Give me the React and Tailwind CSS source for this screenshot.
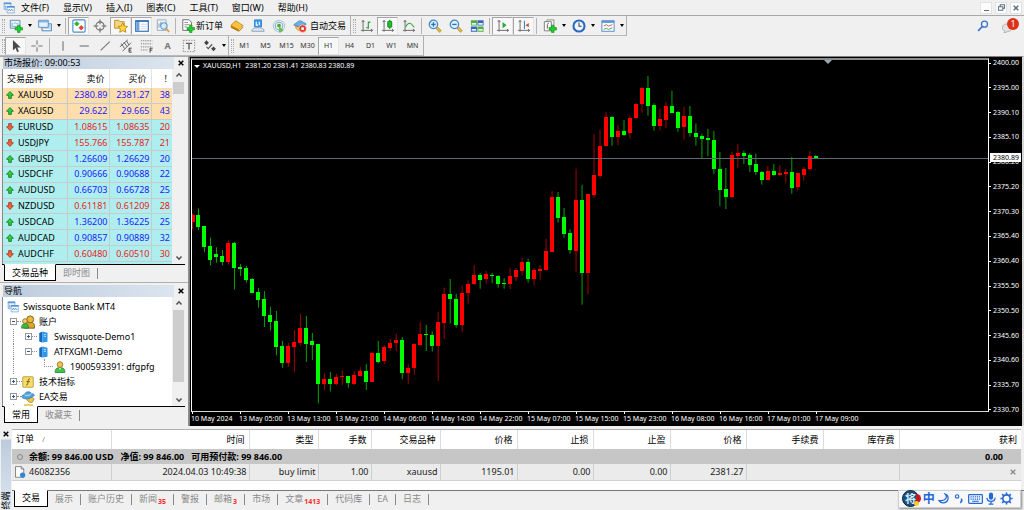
import React from "react";

/* ---------- chart data: [direction, high, body top, body bottom, low] in thirds of a pixel ---------- */
const U = "up";
const D = "down";
const shift = (dy, rows) => rows.map(([d, ...v]) => [d, ...v.map((n) => (n + dy) / 3)]);

const CANDLES = [
  ...shift(426, [
    [U, 40, 45, 66, 88], [D, 25, 45, 81, 90], [D, 77, 79, 140, 157], [D, 113, 138, 180, 196],
    [D, 142, 162, 170, 188], [D, 150, 167, 185, 196], [U, 122, 129, 185, 194], [D, 126, 129, 204, 268],
    [D, 192, 201, 206, 228], [D, 198, 204, 240, 248], [D, 234, 237, 278, 278], [D, 264, 275, 300, 323],
    [D, 273, 297, 347, 381], [D, 320, 345, 365, 392], [D, 333, 363, 441, 466], [D, 423, 438, 489, 503],
    [U, 429, 438, 489, 501], [U, 390, 426, 441, 516], [U, 342, 383, 429, 437], [D, 348, 383, 431, 486],
    [D, 399, 423, 434, 480], [D, 432, 433, 551, 610], [U, 520, 538, 552, 570], [D, 516, 538, 552, 574],
    [U, 521, 530, 552, 556], [U, 511, 528, 530, 554], [D, 528, 529, 549, 563], [U, 514, 525, 552, 555],
    [U, 501, 514, 527, 530], [D, 492, 514, 545, 570], [U, 457, 459, 545, 545], [D, 423, 459, 485, 490],
    [U, 435, 441, 484, 492], [U, 417, 429, 443, 452], [U, 401, 420, 430, 453],
  ]),
  ...shift(366, [
    [D, 471, 480, 578, 598], [U, 553, 564, 578, 611], [U, 490, 493, 564, 584], [U, 426, 462, 495, 497],
    [D, 435, 462, 465, 513], [D, 454, 464, 497, 515], [U, 396, 426, 497, 603], [U, 323, 342, 428, 477],
    [D, 297, 342, 356, 430], [D, 342, 356, 434, 443], [U, 318, 338, 434, 456], [U, 301, 311, 338, 371],
    [U, 255, 285, 312, 315], [D, 279, 285, 300, 326], [U, 273, 282, 297, 311], [D, 279, 285, 288, 309],
    [D, 285, 287, 312, 323], [D, 294, 309, 312, 326], [U, 264, 288, 312, 327], [U, 264, 270, 291, 303],
    [U, 234, 246, 272, 286], [D, 236, 246, 297, 308], [U, 264, 270, 297, 315], [U, 255, 267, 272, 299],
    [U, 177, 213, 270, 273], [U, 33, 51, 215, 215], [D, 36, 52, 113, 128], [D, 84, 110, 162, 173],
    [D, 148, 160, 210, 221], [U, -34, 60, 212, 275], [D, 15, 60, 279, 374], [U, 42, 43, 279, 342],
  ]),
  ...shift(-6, [
    [U, 234, 357, 417, 426], [U, 221, 269, 359, 367], [U, 168, 183, 270, 272], [D, 180, 183, 242, 269],
    [U, 207, 225, 242, 267], [D, 192, 225, 237, 240], [U, 179, 186, 231, 248], [U, 141, 143, 187, 190],
    [U, 93, 96, 144, 170], [D, 60, 96, 150, 179], [D, 142, 147, 210, 224], [U, 158, 189, 210, 223],
    [U, 138, 150, 192, 216], [D, 104, 150, 170, 171], [D, 165, 168, 216, 227], [U, 153, 180, 214, 251],
    [D, 150, 180, 231, 242], [D, 202, 231, 242, 269], [D, 233, 240, 248, 309], [D, 219, 246, 253, 300],
    [D, 225, 251, 339, 354], [D, 288, 339, 402, 450], [D, 336, 399, 423, 459], [U, 287, 297, 423, 426],
    [U, 264, 291, 300, 336], [D, 284, 291, 300, 324], [D, 291, 297, 327, 348], [D, 293, 324, 349, 357],
    [D, 345, 348, 372, 386], [U, 330, 345, 372, 372], [D, 324, 345, 357, 359], [U, 327, 351, 357, 360],
    [U, 339, 348, 353, 380], [D, 303, 349, 396, 413], [U, 350, 352, 394, 404], [U, 333, 339, 356, 374],
    [U, 285, 300, 339, 344], [D, 297, 300, 306, 309],
  ]),
];

const PRICES = ["2400.00", "2395.00", "2390.10", "2385.10", "2380.20", "2375.20", "2370.30", "2365.40", "2360.40", "2355.50", "2350.50", "2345.60", "2340.60", "2335.70", "2330.70"];
const TIMES = ["10 May 2024", "13 May 05:00", "13 May 13:00", "13 May 21:00", "14 May 06:00", "14 May 14:00", "14 May 22:00", "15 May 07:00", "15 May 15:00", "15 May 23:00", "16 May 08:00", "16 May 16:00", "17 May 01:00", "17 May 09:00"];

const QUOTES = [
  ["XAUUSD", "2380.89", "2381.27", 38, U, "gold"],
  ["XAGUSD", "29.622", "29.665", 43, U, "gold"],
  ["EURUSD", "1.08615", "1.08635", 20, D],
  ["USDJPY", "155.766", "155.787", 21, D],
  ["GBPUSD", "1.26609", "1.26629", 20, U],
  ["USDCHF", "0.90666", "0.90688", 22, U],
  ["AUDUSD", "0.66703", "0.66728", 25, U],
  ["NZDUSD", "0.61181", "0.61209", 28, D],
  ["USDCAD", "1.36200", "1.36225", 25, U],
  ["AUDCAD", "0.90857", "0.90889", 32, U],
  ["AUDCHF", "0.60480", "0.60510", 30, D],
];

/* ---------- icons ---------- */
const Svg = ({ children, className = "size-[14px]" }) => (
  <svg viewBox="0 0 16 16" className={`${className} shrink-0`} fill="none" aria-hidden="true">{children}</svg>
);
const Plus = ({ x = 9, y = 9 }) => (
  <path transform={`translate(${x} ${y})`} d="M2.800 0h2.800v2.800h2.800v2.800H5.600v2.800H2.800V5.600H0V2.800h2.800z" fill="#1fd02a" stroke="#0c8a18" strokeWidth=".7" />
);
const AppIcon = () => (
  <Svg className="size-[12px]">
    <path d="M1.500 1h9v9h-9z" fill="#eaf4fd" stroke="#6fa5d6" />
    <path d="M1 1h10v2H1z" fill="#5d98d2" />
    <path d="M5.500 6h9.500v8.500H5.500z" fill="#f4faff" stroke="#6fa5d6" />
    <path d="M5 5.500h10.500v2H5z" fill="#4e8bca" />
    <path d="M7 12l1.500-2.500L10 12l1.500-2.500L13.500 12M3 5v4" stroke="#4e8bca" />
  </Svg>
);
const NewChart = () => (
  <Svg>
    <path d="M1.500 1.500h11v9h-11z" fill="#eef6fd" stroke="#4f86bb" />
    <path d="M3.500 8V4M3 8.500h8M5 6l2-2 2 2 2-2" stroke="#7aa3c8" />
    <Plus x={7} y={7} />
  </Svg>
);
const Profiles = () => (
  <Svg>
    <path d="M4.500 5.500h11v8h-11z" fill="#bcd8f2" stroke="#4f86bb" />
    <path d="M.7 1.500h11v8H.7z" fill="#e7f2fc" stroke="#4f86bb" />
    <path d="M1 2h10.500v2H1z" fill="#86b4de" />
    <path d="M6 12h8" stroke="#fff" />
  </Svg>
);
const MarketIcon = () => (
  <Svg>
    <rect x="1" y="1" width="14" height="14" rx="1.500" fill="#fbfdff" stroke="#4a90d0" strokeWidth="1.300" />
    <path d="M5.500 3l2.500 2.500L5.500 8 3 5.500z" fill="#22b52c" stroke="#22b52c" />
    <path d="M10.500 7.500L13 10l-2.500 2.500L8 10z" fill="#e2432a" stroke="#e2432a" />
  </Svg>
);
const Target = () => (
  <Svg>
    <circle cx="8" cy="8" r="4.700" stroke="#6a6a6a" strokeWidth="1.200" />
    <path d="M8 .5v5.500M8 10v5.500M.5 8H6M10 8h5.500" stroke="#6a6a6a" strokeWidth="1.200" />
  </Svg>
);
const FolderStar = () => (
  <Svg>
    <path d="M.7 1.500h5l1 1.500h5v7.500H.7z" fill="#f5d67c" stroke="#b98a2b" />
    <path d="M10 4.500l1.700 3.600 3.800.4-2.800 2.700.8 4L10 13.300l-3.500 1.900.8-4-2.800-2.700 3.800-.4z" fill="#ffd83a" stroke="#b07d13" strokeWidth=".9" />
  </Svg>
);
const PanelIcon = () => (
  <Svg>
    <rect x=".8" y="2" width="14.400" height="12" fill="#fff" stroke="#2f6cb4" strokeWidth="1.300" />
    <path d="M1.500 2.500h3.500v11H1.500z" fill="#6da2dc" />
    <path d="M1 2.500h14" stroke="#2f6cb4" strokeWidth="1.500" />
    <path d="M6.500 6h7M6.500 8.500h7M6.500 11h7" stroke="#c3d6ea" />
  </Svg>
);
const PageSearch = () => (
  <Svg>
    <path d="M1.500 1h10v12h-10z" fill="#f3f7fb" stroke="#90a2b3" />
    <path d="M3.500 10V5M5.500 8V3" stroke="#7b92a8" />
    <circle cx="9" cy="8" r="3.700" fill="#cfe6f8" fillOpacity=".8" stroke="#5d94c8" strokeWidth="1.200" />
    <path d="M11.700 11l3.300 3.800" stroke="#d9a43a" strokeWidth="2" />
  </Svg>
);
const NewOrder = () => (
  <Svg>
    <path d="M2 .8h7l3 3V13H2z" fill="#fafafa" stroke="#666" />
    <path d="M4 4h4M4 6.500h6M4 9h3" stroke="#888" />
    <Plus x={7} y={7} />
  </Svg>
);
const GoldBook = () => (
  <Svg>
    <path d="M1 7.500L6.500 2 15 7.500v2.500l-5 4.500L1 10z" fill="#b97a10" />
    <path d="M1 7.500L6.500 2 15 7.500l-5 4.800z" fill="#f6c341" stroke="#b97a10" strokeWidth=".7" />
    <path d="M10 12.800l5-4.300" stroke="#fff2c0" />
  </Svg>
);
const Community = () => (
  <Svg>
    <path d="M4 1h8v8H4z" fill="#3c9cf0" stroke="#2a7fd0" />
    <path d="M6 3v4h2M9.500 3v4" stroke="#fff" strokeWidth="1.200" />
    <path d="M1 14c0-3 3-4 7-4s7 1 7 4z" fill="#dfe8f2" stroke="#8097b2" />
  </Svg>
);
const Signal = () => (
  <Svg>
    <circle cx="8" cy="8" r="6.500" stroke="#b4c8d6" strokeWidth="1.200" />
    <circle cx="8" cy="8" r="4.300" stroke="#7fa9c4" strokeWidth="1.200" />
    <circle cx="8" cy="7.500" r="2.200" fill="#3fae3e" />
    <path d="M8 8v7.500c3 0 4-1.500 5-3z" fill="#63c25f" />
  </Svg>
);
const AutoTrade = () => (
  <Svg>
    <path d="M3 8c0 4 3 6 7 5l3-5-4 1.500z" fill="#f2c84a" stroke="#b48a1d" strokeWidth=".8" />
    <path d="M1 7c0-1.500 2-2 3-2 .5-3 6-4 8-1 1 .3 3 1 3 2l-6 3.500z" fill="#6ab0e6" stroke="#2f78b8" strokeWidth=".8" />
    <circle cx="11" cy="11" r="4.300" fill="#e23a26" stroke="#fff" strokeWidth=".6" />
    <path d="M9.500 9.500h3v3h-3z" fill="#fff" />
  </Svg>
);
const Axes = () => <path d="M3.500 1.500v13M1 13h13.500M2 3.500l1.500-2L5 3.500M12.500 11.500l2 1.500-2 1.500" stroke="#6b6b6b" strokeWidth="1.100" />;
const BarsIcon = () => <Svg><Axes /><path d="M9.500 3v8M9.500 3.500H12M7 10h2.500" stroke="#2b9a34" strokeWidth="1.300" /></Svg>;
const CandleIcon = () => <Svg><Axes /><path d="M10 1v10.500" stroke="#16861f" /><rect x="7.700" y="2.500" width="4.600" height="7" rx="1" fill="#1fc22b" stroke="#11781a" /></Svg>;
const LineIcon = () => <Svg><Axes /><path d="M4 9.500C6 5 8.500 3.500 11 6l3 3.500" stroke="#3aa443" strokeWidth="1.200" /></Svg>;
const Zoom = ({ plus }) => (
  <Svg>
    <path d="M9.500 9.500l5 5" stroke="#a87a1c" strokeWidth="3.200" />
    <path d="M9.500 9.500l5 5" stroke="#f0c54e" strokeWidth="1.800" />
    <circle cx="6.200" cy="6.200" r="4.800" fill="#d9effc" stroke="#3d86c8" strokeWidth="1.400" />
    <path d="M3.700 6.200h5" stroke="#2a6fb5" strokeWidth="1.500" />
    {plus && <path d="M6.200 3.700v5" stroke="#2a6fb5" strokeWidth="1.500" />}
  </Svg>
);
const Tile = () => (
  <Svg>
    <path d="M1 1.500h7v6H1zM8.500 8.500h7v6h-7z" fill="#4fae3a" />
    <path d="M8.500 1.500h7v6h-7zM1 8.500h7v6H1z" fill="#3566c0" />
    <path d="M2 4.500h5v2H2zM9.500 4.500h5v2h-5zM2 11.500h5v2H2zM9.500 11.500h5v2h-5z" fill="#e6f0fa" />
  </Svg>
);
const AutoScroll = () => <Svg><Axes /><path d="M7.500 3.500L12 7l-4.500 3.500z" fill="#27a832" /></Svg>;
const ChartShift = () => <Svg><Axes /><path d="M8.500 2v9.500" stroke="#3d7fc0" strokeWidth="1.200" /><path d="M13.500 4.500v5L9.500 7z" fill="#c8553c" /></Svg>;
const Indicators = () => (
  <Svg>
    <path d="M4.500 1h8v10h-8z" fill="#f2f2f2" stroke="#888" />
    <path d="M1.500 3h8v10.500h-8z" fill="#fafafa" stroke="#777" />
    <path d="M6.500 5C5 5 5 6 5 7v4" stroke="#555" />
    <Plus x={7} y={7} />
  </Svg>
);
const Clock = () => (
  <Svg>
    <circle cx="8" cy="8" r="6.300" fill="#eef6ff" stroke="#2a69bd" strokeWidth="2.400" />
    <path d="M8 4v4.300h3" stroke="#444" strokeWidth="1.200" />
  </Svg>
);
const Template = () => (
  <Svg>
    <rect x="1" y="2" width="14" height="12" fill="#f8fbff" stroke="#4a84be" />
    <path d="M1 2h14v2.500H1z" fill="#5b9bd8" />
    <path d="M3 8l3-1.500 2.500 1.500L13 6.500" stroke="#c9543c" />
    <path d="M3 12l3-1.500L8.500 12l4.500-2" stroke="#4a9a44" />
  </Svg>
);
const Cursor = () => <Svg><path d="M4.500 1v12l3-2.800L9.300 15l2-.9-1.900-4.400h4z" fill="#4a4a4a" /></Svg>;
const Cross = () => <Svg><path d="M8 1.500v5M8 9.500v5M1.500 8h5M9.500 8h5" stroke="#777" strokeWidth="1.200" /></Svg>;
const VLine = () => <Svg><path d="M8 2.500v11" stroke="#777" strokeWidth="1.300" /></Svg>;
const HLine = () => <Svg><path d="M3 8h10.500" stroke="#777" strokeWidth="1.300" /></Svg>;
const Diag = () => <Svg><path d="M3 13L13.500 3" stroke="#777" strokeWidth="1.300" /></Svg>;
const Channel = () => (
  <Svg>
    <path d="M1 9l9-8M4 14L14 4M2.500 5l4 6M5.500 3.500l4 5.500M8.500 2l3 5" stroke="#666" strokeWidth="1.100" />
    <path d="M14.500 10.500h-3v4.500h3M11.500 12.700h2.500" stroke="#333" />
  </Svg>
);
const Fibo = () => (
  <Svg>
    <path d="M1 2h13M1 5.500h13M1 9h13M1 12.500h8" stroke="#777" strokeDasharray="1.500 1" />
    <path d="M14.500 10.500h-3v5M11.500 12.700h2.500" stroke="#333" />
  </Svg>
);
const TextBoxIcon = () => (
  <Svg>
    <rect x="1.500" y="1.500" width="13" height="13" stroke="#777" strokeDasharray="1.500 1.500" />
    <path d="M4.500 5h7M8 5v7" stroke="#666" strokeWidth="1.700" />
  </Svg>
);
const Shapes = () => (
  <Svg>
    <path d="M4 1.500l2.700 2.700L4 7 1.300 4.200z" fill="#444" />
    <path d="M12 8.500l2.700 2.700L12 14l-2.700-2.800z" fill="#444" />
    <path d="M4 9l2 2 4.500-5" stroke="#555" strokeWidth="1.300" />
  </Svg>
);
const Loupe = () => (
  <Svg className="size-[12px]">
    <circle cx="10" cy="5.500" r="4" fill="#eaf2fd" stroke="#3b6fd0" strokeWidth="1.700" />
    <path d="M7 8.700L1.500 14.500" stroke="#3b6fd0" strokeWidth="2.200" />
  </Svg>
);
const QuoteArrow = ({ up }) => (
  <svg viewBox="0 0 9 9" className="size-[8px] shrink-0" aria-hidden="true">
    <path d={up ? "M4.500.6L8.400 4.800H6V8.300H3V4.800H.6z" : "M4.500 8.400L.6 4.200H3V.7h3v3.500h2.400z"} fill={up ? "#2fd13b" : "#f4653f"} stroke={up ? "#1b7a2a" : "#a8391c"} strokeWidth="1" />
  </svg>
);
const Accounts = () => (
  <Svg>
    <path d="M4 15c0-5 2-7 6.500-7s5 3 5 7z" fill="#d9a62e" stroke="#7a5a14" />
    <circle cx="10.500" cy="5" r="4" fill="#e8b83c" stroke="#7a5a14" />
    <circle cx="4.500" cy="7" r="2.700" fill="#f0cf66" stroke="#7a5a14" strokeWidth=".8" />
    <path d="M.7 15c0-4 1.500-5 4-5s3.800 1 3.800 5z" fill="#3cba42" stroke="#1f7a26" strokeWidth=".8" />
  </Svg>
);
const Server = () => (
  <Svg className="size-[12px]">
    <path d="M3 2.500L7 .7V15.300L3 14z" fill="#1668b8" />
    <path d="M7 .7l7 1.500v12l-7 1.100z" fill="#2f97ea" />
    <path d="M9 4.500l3 .5M9 7l3 .3" stroke="#d8f0ff" />
  </Svg>
);
const User = () => (
  <Svg className="size-[12px]">
    <path d="M1.500 15.300c0-5 2-6.300 6.500-6.300s6.500 1.300 6.500 6.300z" fill="#3fc445" stroke="#1f7a26" />
    <path d="M6.500 9.500L8 12l1.500-2.500z" fill="#fff" />
    <circle cx="8" cy="4.700" r="3.800" fill="#edc350" stroke="#8f6b18" />
  </Svg>
);
const Func = () => (
  <Svg className="size-[12px]">
    <rect x="1" y="1" width="14" height="14" rx="1" fill="#f8dc6a" stroke="#a98a28" />
    <path d="M10.500 4C8 3.500 8.300 6 8 8s-.2 4.500-2.500 4M6 7.500h4.500" stroke="#6b5210" strokeWidth="1.200" />
  </Svg>
);
const Expert = () => (
  <Svg>
    <path d="M6 9c1 4 4 6 7 5l2-4-3-2z" fill="#f0c64a" stroke="#9c781c" strokeWidth=".8" />
    <path d="M.7 8c.3-2 2-2.500 3.300-2.500C4.500 1.500 10.500 1 12 4c1.500.3 3.500 1 3.300 2.300L9 10C6 10.500 2 10 .7 8z" fill="#54a6e0" stroke="#2a6ca8" strokeWidth=".8" />
    <path d="M4 5.500c2 1.500 6 1 8-1.500" stroke="#d5ecfb" strokeWidth=".9" />
  </Svg>
);
const OrderDoc = () => (
  <Svg className="size-[12px]">
    <path d="M2 .8h7.500L13 4v11H2z" fill="#fff" stroke="#666" />
    <path d="M9.500.8V4H13" stroke="#666" />
    <circle cx="11.500" cy="12" r="3.500" fill="#2b86dc" />
  </Svg>
);
const CloseX = ({ className = "size-[6px] text-black" }) => (
  <svg viewBox="0 0 6 6" className={className} aria-hidden="true"><path d="M.7.7l4.600 4.600M5.300.7L.7 5.300" stroke="currentColor" strokeWidth="1.500" /></svg>
);
const Chevron = ({ down }) => (
  <svg viewBox="0 0 8 6" className="w-[8px] h-[6px]" fill="none" aria-hidden="true"><path d={down ? "M1.500 1.500L4 4.200l2.500-2.700" : "M1.500 4.500L4 1.800l2.500 2.700"} stroke="#505050" strokeWidth="1.500" /></svg>
);

/* ---------- toolbar parts ---------- */
const Handle = () => <span className="w-[3px] h-[14px] shrink-0 border-x border-dotted border-[#a8a8a8]" />;
const Sep = () => <span className="w-px h-[16px] mx-[2px] shrink-0 bg-[#b4b4b4]" />;
const Tool = ({ label, pressed, children }) => (
  <button
    type="button"
    aria-label={label}
    aria-pressed={pressed}
    className={`h-[18px] w-[21px] shrink-0 flex items-center justify-center ${pressed ? "bg-[#f8f8f8] border border-[#a6a6a6] border-r-[#e4e4e4] border-b-[#e4e4e4]" : ""}`}
  >
    {children}
  </button>
);
const Caret = ({ label }) => (
  <button type="button" aria-label={label} className="w-[8px] h-[18px] shrink-0 flex items-center justify-center">
    <span className="border-x-2 border-x-transparent border-t-[3px] border-t-black" />
  </button>
);
const Group = ({ children }) => (
  <div className="h-[20px] flex items-center pl-[2px] border-r border-r-[#b0b0b0] border-b border-b-[#b8b8b8]">{children}</div>
);

function MenuBar() {
  const items = ["文件(F)", "显示(V)", "插入(I)", "图表(C)", "工具(T)", "窗口(W)", "帮助(H)"];
  return (
    <header className="h-[16px] flex items-center border-b border-[#a8a8a8] pl-[3px] pr-[2px]">
      <AppIcon />
      <nav className="flex gap-[14px] ml-[6px]">
        {items.map((t) => <button type="button" key={t} className="leading-[14px] text-black">{t}</button>)}
      </nav>
      <div className="ml-auto flex gap-[3px] text-[#5c6f84]">
        <button type="button" aria-label="最小化" className="w-[12px] h-[12px] bg-[#fcfcfc] border border-[#e2e2e2] flex items-end justify-center pb-[2px]"><span className="w-[5px] h-px bg-[#5c6f84]" /></button>
        <button type="button" aria-label="还原" className="w-[12px] h-[12px] bg-[#fcfcfc] border border-[#e2e2e2] flex items-center justify-center">
          <svg viewBox="0 0 8 8" className="size-[7px]" fill="none" aria-hidden="true"><path d="M2.500 2.500V.8h5v4H6M.5 3.200h5v4h-5z" stroke="currentColor" strokeWidth="1.200" /></svg>
        </button>
        <button type="button" aria-label="关闭" className="w-[12px] h-[12px] bg-[#fcfcfc] border border-[#e2e2e2] flex items-center justify-center"><CloseX className="size-[6px]" /></button>
      </div>
    </header>
  );
}

function Toolbars() {
  return (
    <div className="flex justify-between">
      <div>
        <div className="flex">
          <Group>
            <Handle />
            <Tool label="新图表"><NewChart /></Tool><Caret label="新图表选项" />
            <Tool label="配置文件"><Profiles /></Tool><Caret label="配置文件选项" />
            <Sep />
            <Tool label="市场报价" pressed><MarketIcon /></Tool>
            <Tool label="数据窗口"><Target /></Tool>
            <Tool label="导航" pressed><FolderStar /></Tool>
            <Tool label="终端" pressed><PanelIcon /></Tool>
            <Tool label="策略测试"><PageSearch /></Tool>
            <Sep />
            <button type="button" className="h-[18px] px-[3px] flex items-center gap-px"><NewOrder />新订单</button>
            <Tool label="MetaEditor"><GoldBook /></Tool>
            <Tool label="社区"><Community /></Tool>
            <Tool label="信号"><Signal /></Tool>
            <button type="button" className="h-[18px] px-[4px] flex items-center gap-[3px]"><AutoTrade />自动交易</button>
          </Group>
          <Group>
            <Handle />
            <Tool label="柱状图"><BarsIcon /></Tool>
            <Tool label="蜡烛图" pressed><CandleIcon /></Tool>
            <Tool label="折线图"><LineIcon /></Tool>
            <Sep />
            <Tool label="放大"><Zoom plus /></Tool>
            <Tool label="缩小"><Zoom /></Tool>
            <Tool label="平铺窗口"><Tile /></Tool>
            <Sep />
            <Tool label="自动滚动" pressed><AutoScroll /></Tool>
            <Tool label="图表平移" pressed><ChartShift /></Tool>
            <Sep />
            <Tool label="指标"><Indicators /></Tool><Caret label="指标列表" />
            <Tool label="周期"><Clock /></Tool><Caret label="周期列表" />
            <Tool label="模板"><Template /></Tool><Caret label="模板列表" />
          </Group>
        </div>
        <div className="flex">
          <Group>
            <Handle />
            <Tool label="光标" pressed><Cursor /></Tool>
            <Tool label="十字线"><Cross /></Tool>
            <Sep />
            <Tool label="垂直线"><VLine /></Tool>
            <Tool label="水平线"><HLine /></Tool>
            <Tool label="趋势线"><Diag /></Tool>
            <Tool label="等距通道"><Channel /></Tool>
            <Tool label="斐波那契"><Fibo /></Tool>
            <Tool label="文字"><span className="font-bold text-[#777]">A</span></Tool>
            <Tool label="文字标签"><TextBoxIcon /></Tool>
            <Tool label="箭头"><Shapes /></Tool><Caret label="箭头列表" />
          </Group>
          <Group>
            <Handle />
            {["M1", "M5", "M15", "M30", "H1", "H4", "D1", "W1", "MN"].map((t) => (
              <Tool key={t} label={t} pressed={t === "H1"}><span className="text-[7px] text-[#333]">{t}</span></Tool>
            ))}
          </Group>
        </div>
      </div>
      <div className="flex gap-[12px] pt-[3px] pr-[5px] items-start">
        <button type="button" aria-label="搜索" className="mt-px"><Loupe /></button>
        <button type="button" aria-label="通知" className="relative w-[18px] h-[14px]">
          <svg viewBox="0 0 18 14" className="w-[18px] h-[14px]" aria-hidden="true">
            <path d="M5 5c-4 0-5 6-1 7l-1 2 4-1.500c4 0 5-5 2-7z" fill="#e2e2e2" stroke="#aaa" strokeWidth=".8" />
          </svg>
          <span className="absolute right-0 -top-px size-[12px] rounded-full bg-[#dd3217] text-white leading-[12px] text-center">1</span>
        </button>
      </div>
    </div>
  );
}

/* ---------- docked panels ---------- */
const PanelTitle = ({ children }) => (
  <div className="h-[12px] flex items-center justify-between pl-[3px] pr-[4px]">
    <h2 className="grow leading-[12px] bg-linear-to-r from-[#bccbdc] to-[#dbe5ef] mr-[4px] pl-px">{children}</h2>
    <button type="button" aria-label="关闭面板"><CloseX /></button>
  </div>
);
const ScrollBar = ({ thumb }) => (
  <div className="w-[13px] shrink-0 bg-[#f0f0f0] flex flex-col items-center py-[3px]">
    <Chevron />
    <div className={`${thumb} w-[11px] mt-[4px] bg-[#cdcdcd]`} />
    <span className="mt-auto flex"><Chevron down /></span>
  </div>
);
const PanelTabs = ({ active, other }) => (
  <div role="tablist" className="h-[18px] ml-[2px] mr-[3px] border-t border-black flex items-start">
    <button type="button" role="tab" aria-selected="true" className="-mt-px ml-[2px] h-[17px] px-[7px] bg-white border border-black border-t-white">{active}</button>
    <button type="button" role="tab" aria-selected="false" className="h-[16px] px-[7px] text-[#8a8a8a]">{other}</button>
    <span className="w-px h-[11px] mt-[3px] bg-[#8a8a8a]" />
  </div>
);

function MarketWatch() {
  return (
    <section className="border-b border-[#b0b0b0]">
      <PanelTitle>市场报价: 09:00:53</PanelTitle>
      <div className="flex ml-[2px] mr-[3px] h-[195px] bg-[#afeeee] border-l border-[#888]">
        <div className="grow overflow-hidden">
          <table className="w-full h-[193px] table-fixed border-collapse">
            <colgroup><col /><col className="w-[42px]" /><col className="w-[42px]" /><col className="w-[21px]" /></colgroup>
            <thead>
              <tr className="h-[19px] bg-white">
                <th className="font-normal text-left pl-[4px] border-r border-[#e4e4e4]">交易品种</th>
                <th className="font-normal text-right pr-[4px] border-r border-[#e4e4e4]">卖价</th>
                <th className="font-normal text-right pr-[4px] border-r border-[#e4e4e4]">买价</th>
                <th className="font-normal text-right pr-[5px]">!</th>
              </tr>
            </thead>
            <tbody>
              {QUOTES.map(([s, bid, ask, spread, dir, tone]) => (
                <tr key={s} className={`border-b border-[#c6cccc] leading-[12px] ${tone ? "bg-[#ffdead]" : ""} ${dir === U ? "text-[#1a1aff]" : "text-[#f01818]"}`}>
                  <td className="border-r border-[#c6cccc] text-black pl-[3px]"><span className="flex items-center gap-[4px]"><QuoteArrow up={dir === U} />{s}</span></td>
                  <td className="border-r border-[#c6cccc] text-right pr-px">{bid}</td>
                  <td className="border-r border-[#c6cccc] text-right pr-px">{ask}</td>
                  <td className="text-right pr-[2px]">{spread}</td>
                </tr>
              ))}
            </tbody>
          </table>
        </div>
        <ScrollBar thumb="h-[12px]" />
      </div>
      <PanelTabs active="交易品种" other="即时图" />
    </section>
  );
}

const Box = ({ open }) => (
  <svg viewBox="0 0 7 7" className="size-[7px] shrink-0" aria-hidden="true"><rect x=".5" y=".5" width="6" height="6" fill="#fff" stroke="#999" /><path d={open ? "M2 3.500h3" : "M2 3.500h3M3.500 2v3"} stroke="#2f55a5" /></svg>
);
const Dots = ({ className = "w-[4px]" }) => <span className={`${className} shrink-0 border-t border-dotted border-[#909090]`} />;
const Row = ({ indent, children }) => <li className={`h-[15px] flex items-center ${indent} whitespace-nowrap`}>{children}</li>;

function Navigator() {
  return (
    <section className="mt-[2px] pb-[2px]">
      <PanelTitle>导航</PanelTitle>
      <div className="flex ml-[2px] mr-[3px] h-[109px] bg-white border-l border-[#888]">
        <ul className="grow h-full pt-[2px] overflow-hidden">
          <Row indent="pl-[4px]"><AppIcon /><span className="ml-[4px]">Swissquote Bank MT4</span></Row>
          <Row indent="pl-[7px]"><Box open /><Dots /><Accounts /><span className="ml-[4px]">账户</span></Row>
          <Row indent="pl-[10px]"><span className="h-full border-l border-dotted border-[#909090] mr-[11px]" /><Box /><Dots className="w-[5px]" /><Server /><span className="ml-[5px]">Swissquote-Demo1</span></Row>
          <Row indent="pl-[10px]"><span className="h-full border-l border-dotted border-[#909090] mr-[11px]" /><Box open /><Dots className="w-[5px]" /><Server /><span className="ml-[5px]">ATFXGM1-Demo</span></Row>
          <Row indent="pl-[10px]"><span className="h-full border-l border-dotted border-[#909090] mr-[30px]" /><span className="w-[9px] h-[8px] mb-[7px] mr-px border-l border-b border-dotted border-[#909090]" /><User /><span className="ml-[4px]">1900593391: dfgpfg</span></Row>
          <Row indent="pl-[7px]"><Box /><Dots className="w-[5px]" /><Func /><span className="ml-[5px]">技术指标</span></Row>
          <Row indent="pl-[7px]"><Box /><Dots /><Expert /><span className="ml-[4px]">EA交易</span></Row>
          <Row indent="pl-[10px]"><span className="h-full border-l border-dotted border-[#909090] mr-[10px]" /><span className="self-start w-[9px] h-[2px] bg-[#f0cf66]" /></Row>
        </ul>
        <ScrollBar thumb="h-[72px]" />
      </div>
      <PanelTabs active="常用" other="收藏夹" />
    </section>
  );
}

/* ---------- chart ---------- */
function Chart() {
  const centre = (i) => 0.5 + i * 5.993;
  return (
    <main className="grow min-w-0 bg-black text-white text-[7px] border-t border-l border-[#808080] border-r-2 border-r-[#d8d8d8] flex">
      <div className="grow min-w-0 pt-px pl-px">
        <div className="relative h-[354px] border-t-2 border-t-[#8c8c8c] border-l border-l-white border-r border-r-white border-b border-b-[#d8d8d8] overflow-hidden">
          <svg width="797" height="353" viewBox="0 2 797 353" className="block max-w-none" role="img" aria-label="XAUUSD H1">
            {CANDLES.map(([dir, hi, top, bottom, lo], i) => {
              const c = centre(i);
              const y = Math.round(top);
              return (
                <g key={i} fill={dir === U ? "#ff0000" : "#00ff00"}>
                  <rect x={c - 0.5} y={hi} width="1" height={lo - hi} opacity=".65" />
                  <rect x={Math.round(c - 2)} y={y} width="4" height={Math.max(1, Math.round(bottom) - y)} />
                </g>
              );
            })}
          </svg>
          <span className="absolute inset-x-0 top-[98px] h-px bg-[#5c6874]" />
          <div className="absolute left-[2px] top-px flex items-center gap-[3px] leading-[10px]">
            <span className="border-x-[3px] border-x-transparent border-t-[3px] border-t-white" />
            <span className="whitespace-pre">XAUUSD,H1  2381.20 2381.41 2380.83 2380.89</span>
          </div>
          <span className="absolute right-[156px] top-0 border-x-4 border-x-transparent border-t-4 border-t-[#9aa6b2]" />
        </div>
        <div className="flex overflow-hidden">
          {TIMES.map((t) => (
            <div key={t} className="w-[48px] shrink-0 whitespace-nowrap">
              <span className="block ml-px w-px h-[2px] bg-white" />
              <span className="block leading-[10px]">{t}</span>
            </div>
          ))}
        </div>
      </div>
      <div className="relative w-[33px] shrink-0 pt-px">
        <ul className="h-[357px] flex flex-col justify-between">
          {PRICES.map((p) => (
            <li key={p} className="flex items-center gap-[2px] leading-[10px]"><span className="w-[2px] h-px bg-white" />{p}</li>
          ))}
        </ul>
        <span className="absolute left-px right-px top-[96px] h-[9px] leading-[9px] pl-[3px] bg-white text-black">2380.89</span>
      </div>
    </main>
  );
}

/* ---------- terminal ---------- */
const TERMINAL_TABS = [["展示"], ["账户历史"], ["新闻", "35"], ["警报"], ["邮箱", "3"], ["市场"], ["文章", "1413"], ["代码库"], ["EA"], ["日志"]];
const HEADS = ["时间", "类型", "手数", "交易品种", "价格", "止损", "止盈", "价格", "手续费", "库存费", "获利"];
const CELLS = ["2024.04.03 10:49:38", "buy limit", "1.00", "xauusd", "1195.01", "0.00", "0.00", "2381.27", "", ""];

function InputMethodBar() {
  return (
    <div className="absolute right-[3px] bottom-[2px] h-[18px] w-[123px] pl-[3px] pr-[7px] bg-[#f7f8fa] border border-[#cfcfcf] shadow-[1px_1px_2px_#888] flex items-center justify-between text-[#2468d6]">
      <span className="relative size-[17px] rounded-full bg-[#1d4f7c] border border-[#123] text-[#d6efff] text-[11px] leading-[15px] text-center font-bold">
        将
        <span className="absolute -right-[3px] top-[3px] w-[5px] h-[9px] rounded-r-full bg-[#c01822]" />
        <span className="absolute -right-px bottom-0 size-[5px] rounded-full bg-[#ffc928]" />
      </span>
      <span className="text-[12px] leading-[14px] font-bold">中</span>
      <svg viewBox="0 0 16 16" className="size-[11px]" aria-hidden="true"><path d="M10.500 1.500c4 5 0 11-9 9.500 3 5 11.500 4.500 13-2 .6-3.500-1.500-6.500-4-7.500z" fill="none" stroke="currentColor" strokeWidth="1.800" /></svg>
      <svg viewBox="0 0 16 16" className="size-[11px]" fill="none" aria-hidden="true"><circle cx="6" cy="5" r="2.500" stroke="currentColor" strokeWidth="1.700" /><path d="M12 8.500c1.500 2 .5 4.500-1.500 5.500" stroke="currentColor" strokeWidth="2.500" /></svg>
      <svg viewBox="0 0 18 12" className="w-[15px] h-[10px]" fill="none" aria-hidden="true"><rect x=".8" y=".8" width="16.400" height="10.400" rx="1" stroke="currentColor" strokeWidth="1.500" /><path d="M3 3.500h12M3 6h12" stroke="currentColor" strokeWidth="1.500" strokeDasharray="1.500 1" /><path d="M5 8.700h8" stroke="currentColor" strokeWidth="1.300" /></svg>
      <svg viewBox="0 0 12 16" className="w-[10px] h-[13px]" fill="none" aria-hidden="true"><rect x="3.500" y=".5" width="5" height="9" rx="2.500" fill="currentColor" /><path d="M1 7c0 6 10 6 10 0M6 11.500V15M3 15h6" stroke="currentColor" strokeWidth="1.500" /></svg>
      <svg viewBox="0 0 16 16" className="size-[13px]" fill="none" aria-hidden="true"><circle cx="8" cy="8" r="4.500" stroke="currentColor" strokeWidth="2" /><path d="M8 .5v3M8 12.500v3M.5 8h3M12.500 8h3M2.700 2.700l2 2M11.300 11.300l2 2M13.300 2.700l-2 2M4.700 11.300l-2 2" stroke="currentColor" strokeWidth="2" /></svg>
    </div>
  );
}

function Terminal() {
  return (
    <section className="relative mt-[3px] flex">
      <div className="w-[12px] shrink-0 flex flex-col items-center pt-[2px]">
        <button type="button" aria-label="关闭终端" className="flex"><CloseX /></button>
        <div className="grow mt-[3px] w-[10px] bg-linear-to-t from-[#bccbdc] to-[#dbe5ef] flex justify-start rotate-180">
          <h2 className="[writing-mode:vertical-rl] [text-orientation:sideways] leading-[10px]">终端</h2>
        </div>
      </div>
      <div className="grow min-w-0">
        <div className="mr-[3px] bg-white border-t border-[#b0b0b0] pb-[9px]">
          <table className="w-full table-fixed border-collapse">
            <colgroup>
              <col className="w-[99px]" /><col className="w-[138px]" /><col className="w-[69px]" /><col className="w-[53px]" /><col className="w-[69px]" />
              <col className="w-[77px]" /><col className="w-[76px]" /><col className="w-[77px]" /><col className="w-[76px]" /><col className="w-[77px]" /><col className="w-[76px]" /><col />
            </colgroup>
            <thead>
              <tr className="h-[19px]">
                <th className="font-normal text-left pl-[4px] border-r border-[#dcdcdc]">订单 <span className="ml-[6px] text-[7px] text-[#777]">/</span></th>
                {HEADS.map((h, i) => <th key={i} className="font-normal text-right pr-[4px] border-r border-[#dcdcdc] last:border-r-0">{h}</th>)}
              </tr>
            </thead>
            <tbody>
              <tr className="h-[15px] bg-[#c6c6c6] font-bold leading-[13px]">
                <td colSpan={11} className="pl-[5px]">
                  <span className="flex items-center gap-[6px] whitespace-pre"><span className="size-[6px] rounded-full border border-[#888]" /><span>余额: 99 846.00 USD   净值: 99 846.00   可用预付款: 99 846.00</span></span>
                </td>
                <td className="text-right pr-[18px]">0.00</td>
              </tr>
              <tr className="h-[16px] bg-[#ebebeb] border-b border-[#d0d0d0] leading-[13px] text-[#222]">
                <td className="pl-[2px] border-r border-[#cfcfcf]"><span className="flex items-center gap-[3px]"><OrderDoc />46082356</span></td>
                {CELLS.map((c, i) => <td key={i} className={`text-right pr-[2px] whitespace-nowrap ${i === 8 ? "" : "border-r border-[#cfcfcf]"}`}>{c}</td>)}
                <td><button type="button" aria-label="删除挂单" className="flex ml-auto mr-[5px]"><CloseX className="size-[6px] text-[#909090]" /></button></td>
              </tr>
            </tbody>
          </table>
        </div>
        <div role="tablist" className="h-[20px] border-t border-[#777] flex items-start">
          <button type="button" role="tab" aria-selected="true" className="-mt-px ml-[2px] h-[17px] px-[7px] bg-white border border-black border-t-white">交易</button>
          {TERMINAL_TABS.map(([t, n]) => (
            <div key={t} className="flex items-start">
              <button type="button" role="tab" aria-selected="false" className="h-[16px] px-[7px] text-[#8a8a8a] flex items-center">
                {t}{n && <span className="text-[7px] font-bold text-[#ff2a2a] ml-px pt-[6px] leading-[8px]">{n}</span>}
              </button>
              <span className="w-px h-[11px] mt-[3px] bg-[#8a8a8a]" />
            </div>
          ))}
        </div>
      </div>
      <InputMethodBar />
    </section>
  );
}

export default function App() {
  return (
    <div className="min-h-screen bg-[#f0f0f0] text-black text-[9px] leading-[14px] font-['Noto_Sans','Noto_Sans_CJK_SC',sans-serif]">
      <MenuBar />
      <Toolbars />
      <div className="flex">
        <aside className="w-[189px] shrink-0 border-t border-[#a8a8a8] border-r border-r-[#909090]">
          <MarketWatch />
          <Navigator />
        </aside>
        <Chart />
      </div>
      <Terminal />
    </div>
  );
}
